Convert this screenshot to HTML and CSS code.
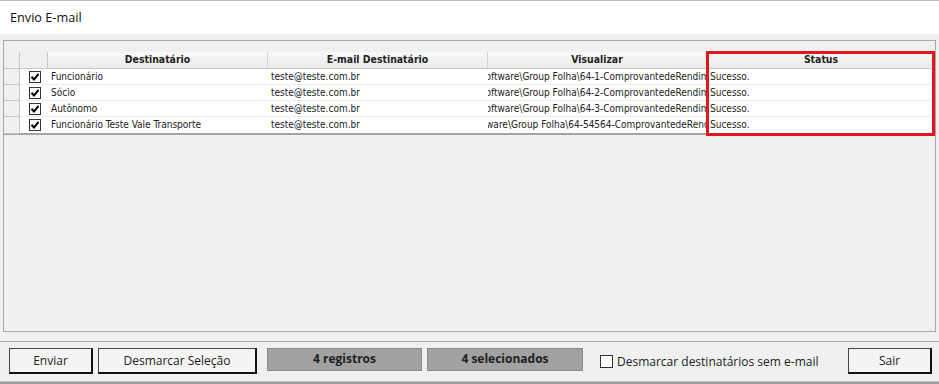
FILE: index.html
```html
<!DOCTYPE html>
<html lang="pt-BR">
<head>
<meta charset="utf-8">
<title>Envio E-mail</title>
<link rel="stylesheet" href="styles.css">
</head>
<body>
<div class="window">
  <div class="titlebar">Envio E-mail</div>
  <div class="content">
    <div class="panel">
      <div class="grid">
        <div class="row head">
          <div class="cell ind"></div>
          <div class="cell chk"></div>
          <div class="cell">Destinatário</div>
          <div class="cell">E-mail Destinatário</div>
          <div class="cell">Visualizar</div>
          <div class="cell">Status</div>
        </div>
        <div class="row">
          <div class="cell ind"></div>
          <div class="cell chk"><svg class="cb" viewBox="0 0 12 12" width="12" height="12"><rect x="0.5" y="0.5" width="11" height="11" fill="#fff" stroke="#333"/><path d="M2.5 5.8 L5 8.4 L9.5 3" fill="none" stroke="#000" stroke-width="2"/></svg></div>
          <div class="cell txt">Funcionário</div>
          <div class="cell txt">teste@teste.com.br</div>
          <div class="cell path"><span>C:\Group Software\Group Folha\64-1-ComprovantedeRendimentos.pdf</span></div>
          <div class="cell txt">Sucesso.</div>
        </div>
        <div class="row">
          <div class="cell ind"></div>
          <div class="cell chk"><svg class="cb" viewBox="0 0 12 12" width="12" height="12"><rect x="0.5" y="0.5" width="11" height="11" fill="#fff" stroke="#333"/><path d="M2.5 5.8 L5 8.4 L9.5 3" fill="none" stroke="#000" stroke-width="2"/></svg></div>
          <div class="cell txt">Sócio</div>
          <div class="cell txt">teste@teste.com.br</div>
          <div class="cell path"><span>C:\Group Software\Group Folha\64-2-ComprovantedeRendimentos.pdf</span></div>
          <div class="cell txt">Sucesso.</div>
        </div>
        <div class="row">
          <div class="cell ind"></div>
          <div class="cell chk"><svg class="cb" viewBox="0 0 12 12" width="12" height="12"><rect x="0.5" y="0.5" width="11" height="11" fill="#fff" stroke="#333"/><path d="M2.5 5.8 L5 8.4 L9.5 3" fill="none" stroke="#000" stroke-width="2"/></svg></div>
          <div class="cell txt">Autônomo</div>
          <div class="cell txt">teste@teste.com.br</div>
          <div class="cell path"><span>C:\Group Software\Group Folha\64-3-ComprovantedeRendimentos.pdf</span></div>
          <div class="cell txt">Sucesso.</div>
        </div>
        <div class="row last">
          <div class="cell ind"></div>
          <div class="cell chk"><svg class="cb" viewBox="0 0 12 12" width="12" height="12"><rect x="0.5" y="0.5" width="11" height="11" fill="#fff" stroke="#333"/><path d="M2.5 5.8 L5 8.4 L9.5 3" fill="none" stroke="#000" stroke-width="2"/></svg></div>
          <div class="cell txt">Funcionário Teste Vale Transporte</div>
          <div class="cell txt">teste@teste.com.br</div>
          <div class="cell path"><span>C:\Group Software\Group Folha\64-54564-ComprovantedeRendimentos.pdf</span></div>
          <div class="cell txt">Sucesso.</div>
        </div>
        <div class="status-mark"></div>
      </div>
    </div>
  </div>
  <div class="footer">
    <button class="btn btn-send">Enviar</button>
    <button class="btn btn-clear">Desmarcar Seleção</button>
    <div class="info info-reg">4 registros</div>
    <div class="info info-sel">4 selecionados</div>
    <label class="opt"><span class="box"></span>Desmarcar destinatários sem e-mail</label>
    <button class="btn btn-exit">Sair</button>
  </div>
</div>
</body>
</html>
```
FILE: styles.css
```css
* { box-sizing: border-box; }
html, body { margin: 0; padding: 0; }
body {
  width: 939px;
  height: 384px;
  background: #f0f0f0;
  font-family: "Open Sans", "Liberation Sans", sans-serif;
  color: #1a1a1a;
  overflow: hidden;
}
.window {
  display: flex;
  flex-direction: column;
  height: 384px;
}
.titlebar {
  height: 34px;
  background: #fff;
  border-top: 1px solid #bdbdbd;
  padding: 7px 0 0 10px;
  font-size: 12.7px;
  line-height: 18px;
  color: #111;
}
.content {
  padding: 6px 3px 0 3px;
}
.panel {
  height: 292px;
  border: 1px solid #a9a9a9;
  padding-top: 11px;
  background: #f0f0f0;
}
.grid {
  position: relative;
  font-family: "DejaVu Sans", "Liberation Sans", sans-serif;
  font-stretch: condensed;
}
.row {
  display: grid;
  grid-template-columns: 16px 28px 220px 220px 219px 1fr;
  height: 16px;
  background: #fff;
  border-bottom: 1px solid #ececec;
}
.row.head {
  height: 17px;
  border-bottom: 1px solid #c9c9c9;
  background: linear-gradient(#f8f8f8, #ebebeb);
}
.row.last {
  height: 18px;
  border-bottom: 2px solid #a3a3a3;
}
.cell {
  overflow: hidden;
  white-space: nowrap;
  font-size: 10px;
  line-height: 15px;
}
.head .cell {
  border-right: 1px solid #d2d2d2;
  font-weight: bold;
  text-align: center;
  font-size: 10.4px;
  color: #222;
}
.head .cell:last-child { border-right: 0; }
.cell.ind {
  background: #f0f0f0;
  border-right: 1px solid #c6c6c6;
  border-bottom: 1px solid #c6c6c6;
  margin-bottom: -1px;
}
.head .cell.ind, .head .cell.chk {
  background: #efefef;
  border-right: 1px solid #c6c6c6;
}
.cell.chk {
  display: flex;
  align-items: center;
  padding-left: 9px;
}
.cb { display: block; }
.cell.txt {
  padding-left: 3px;
  color: #222;
}
.cell.path {
  display: flex;
  justify-content: center;
  color: #222;
}
.cell.path span { flex: none; padding-right: 6px; }
.status-mark {
  position: absolute;
  left: 702px;
  top: -1px;
  width: 229px;
  height: 85px;
  border: 3px solid #e2161c;
  pointer-events: none;
}
.footer {
  margin-top: 9px;
  border-top: 1px solid #a9a9a9;
  border-bottom: 1px solid #c4c4c4;
  height: 41px;
  display: flex;
  align-items: flex-start;
  padding: 6px 7px 0 9px;
  font-size: 12px;
  box-shadow: 0 2px 0 #9d9d9d;
}
.btn {
  font-family: "Open Sans", "Liberation Sans", sans-serif;
  font-size: 12px;
  color: #222;
  height: 26px;
  background: #f4f4f4;
  border: 1px solid #444;
  border-right: 2px solid #111;
  border-bottom: 2px solid #111;
  padding: 0;
  line-height: 22px;
}
.btn-send { width: 84px; }
.btn-clear { width: 159px; margin-left: 5px; }
.info {
  height: 23px;
  background: #a2a2a2;
  border: 1px solid #8a8a8a;
  font-weight: bold;
  text-align: center;
  line-height: 19px;
  font-size: 12px;
  color: #1e1e1e;
}
.info-reg { width: 155px; margin-left: 10px; }
.info-sel { width: 156px; margin-left: 5px; }
.opt {
  display: flex;
  align-items: center;
  margin-left: 17px;
  height: 26px;
  color: #222;
}
.box {
  width: 13px;
  height: 13px;
  background: #fff;
  border: 1px solid #333;
  margin-right: 4px;
}
.btn-exit { width: 84px; margin-left: auto; }
```
